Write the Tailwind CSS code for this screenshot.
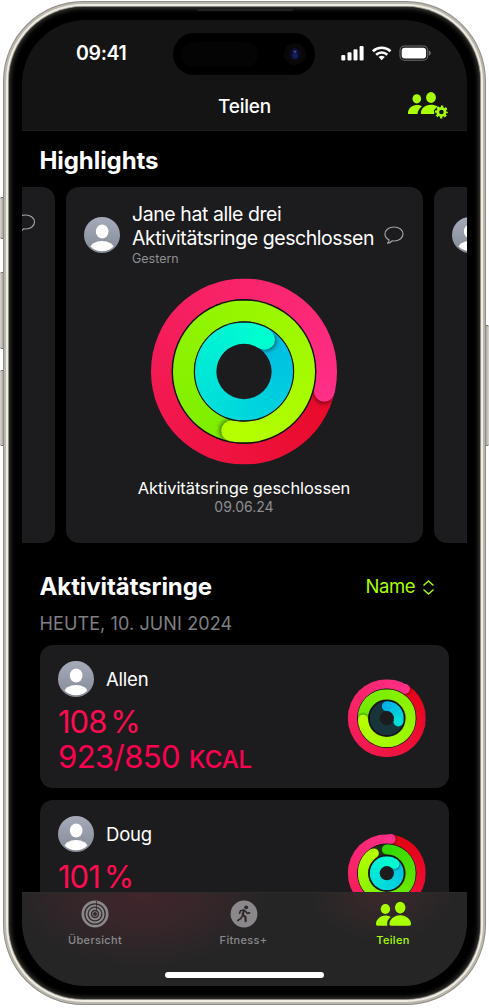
<!DOCTYPE html>
<html lang="de">
<head>
<meta charset="utf-8">
<title>Fitness – Teilen</title>
<script src="https://cdn.jsdelivr.net/npm/@tailwindcss/browser@4"></script>
</head>
<body class="bg-white w-[489px] h-[1008px] overflow-hidden font-['Inter','Noto_Sans',sans-serif] text-white">
<svg width="0" height="0" class="absolute">
  <defs>
    <linearGradient id="av" x1="0" y1="0" x2="0" y2="1"><stop offset="0" stop-color="#a5abb9"/><stop offset="1" stop-color="#858a96"/></linearGradient>
    <symbol id="avatar" viewBox="0 0 36 36">
      <clipPath id="avc"><circle cx="18" cy="18" r="16.3"/></clipPath>
      <circle cx="18" cy="18" r="18" fill="url(#av)"/>
      <ellipse cx="18.2" cy="14.5" rx="6.3" ry="7" fill="#fff"/>
      <ellipse cx="18" cy="32" rx="12" ry="8" fill="#fff" clip-path="url(#avc)"/>
    </symbol>
    <symbol id="bubble" viewBox="0 0 20 19">
      <path d="M10 1C4.900 1 1 4 1 8c0 2.600 1.600 4.700 4 5.900.1 1.300-.6 2.500-1.500 3.300 1.900 0 3.500-.9 4.600-2.300.6.1 1.200.1 1.900.1 5.100 0 9-3 9-7s-3.900-7-9-7z" fill="none" stroke="#a2a2a6" stroke-width="1.200" stroke-linejoin="round"/>
    </symbol>
  </defs>
</svg>
<div class="relative w-[489px] h-[1008px]">
  <!-- side buttons -->
  <div class="absolute left-0 top-[197px] w-[5px] h-[42px] rounded-l-[2px] bg-gradient-to-r from-[#d9d7d0] to-[#8c8981] border-y border-[#6f6c66]"></div>
  <div class="absolute left-0 top-[272px] w-[5px] h-[77px] rounded-l-[2px] bg-gradient-to-r from-[#d9d7d0] to-[#8c8981] border-y border-[#6f6c66]"></div>
  <div class="absolute left-0 top-[370px] w-[5px] h-[76px] rounded-l-[2px] bg-gradient-to-r from-[#d9d7d0] to-[#8c8981] border-y border-[#6f6c66]"></div>
  <div class="absolute left-[484px] top-[325px] w-[5px] h-[121px] rounded-r-[2px] bg-gradient-to-l from-[#d9d7d0] to-[#8c8981] border-y border-[#6f6c66]"></div>
  <!-- metal frame -->
  <div class="absolute left-[3px] top-[1px] w-[483px] h-[1004px] rounded-[80px] bg-[#8f8c85] p-[1px]">
   <div class="size-full rounded-[79px] bg-[#b9b6ad] p-[2px]">
    <div class="size-full rounded-[77px] bg-[#eeece3] p-[2px]">
     <div class="size-full rounded-[75px] bg-[#8d8a82] p-[1px]">
      <div class="size-full rounded-[74px] bg-black shadow-[inset_0_0_5px_1px_#45443f] px-[13px] pt-[13px] pb-[13px]">
       <!-- screen -->
       <div class="relative w-[445px] h-[966px] rounded-[64px] bg-black overflow-hidden flex flex-col">
        <header class="h-[111px] shrink-0 bg-[#141414] border-b border-[#191919]">
          <div class="h-[67px] flex items-center relative">
            <div class="ml-[54px] text-[19.5px] font-semibold leading-[67px] tracking-[-0.350px]">09:41</div>
            <div class="absolute left-[151px] top-[13px] w-[142px] h-[42px] rounded-full bg-black flex items-center justify-between pl-2 pr-[9px]">
              <div class="w-[77px] h-[25px] rounded-full bg-[#040404]"></div>
              <svg width="22" height="22" viewBox="0 0 22 22"><circle cx="11" cy="11" r="11" fill="#0a0709"/><circle cx="11" cy="11" r="6" fill="#0b0c22"/><circle cx="11" cy="8.800" r="2.200" fill="#1f2360"/><circle cx="11" cy="13" r="2.800" fill="#14205c"/><circle cx="11" cy="8.700" r=".8" fill="#5a62b0"/></svg>
            </div>
            <svg class="absolute left-[318px] top-[25px]" width="92" height="17" viewBox="0 0 92 17" fill="#fff">
              <rect x="1.300" y="9.900" width="4" height="5.600" rx="1.200"/><rect x="7.500" y="7.200" width="4" height="8.300" rx="1.200"/><rect x="13.500" y="4.300" width="4" height="11.200" rx="1.200"/><rect x="19.600" y="1" width="4" height="14.500" rx="1.200"/>
              <g fill="none" stroke="#fff" stroke-width="2.600"><path d="M32.900 6.200a13 13 0 0 1 17.600 0"/><path d="M36.100 9.700a8.300 8.300 0 0 1 11.200 0"/></g>
              <path d="M41.700 15.300l-3.100-3.200a4.600 4.600 0 0 1 6.200 0z"/>
              <rect x="60" y="1" width="27.800" height="14.300" rx="4.500" fill="none" stroke="#6d6d6d" stroke-width="1.100"/><rect x="61.700" y="2.700" width="24.400" height="10.900" rx="3"/>
              <path d="M89 5.600c1.200.5 1.800 1.400 1.800 2.500s-.6 2-1.800 2.500z" fill="#6d6d6d"/>
            </svg>
          </div>
          <div class="h-[38px] relative flex items-center justify-center text-[19px] font-medium leading-[38px] tracking-[-0.200px]"><span class="mt-[2px]">Teilen</span>
            <svg class="absolute left-[384px] top-[4px]" width="42" height="30" viewBox="0 0 42 30" fill="#a8ff00">
              <ellipse cx="10.800" cy="7.800" rx="4.300" ry="4.600"/><ellipse cx="25" cy="6.500" rx="4.900" ry="5.400"/>
              <path d="M2 23c-.3-5.400 3.700-9 8.800-9 2 0 3.700.5 5.100 1.400-2.700 1.900-4.400 4.600-4.400 7.600z"/>
              <path d="M15 23c-.7-5.200 3.900-9.300 10-9.300 2.600 0 4.800.6 6.600 1.900-1.500.8-1.500 1.800-2.600 2.600-1 .5-1.200 1.200-1 2.200.4.900 0 1.700.3 2.600z"/>
              <circle cx="35.400" cy="21" r="3.700" fill="none" stroke="#a8ff00" stroke-width="2.800"/>
              <circle cx="35.400" cy="21" r="5.500" fill="none" stroke="#a8ff00" stroke-width="2" stroke-dasharray="2.300 2.020" stroke-dashoffset="1.150"/>
            </svg>
          </div>
        </header>

        <main class="flex flex-col shrink-0">
          <h2 class="h-[56px] pl-[17.500px] text-[24px] font-bold leading-[60px] tracking-[-0.080px]">Highlights</h2>
          <section class="flex gap-[11px] w-[740px] h-[356px]">
            <div class="w-[33px] h-[356px] rounded-r-[13px] bg-[#1c1c1e] overflow-hidden shrink-0">
              <svg class="mt-[27px] -ml-[7px]" width="21" height="19"><use href="#bubble"/></svg>
            </div>
            <article class="w-[357px] h-[356px] rounded-[13px] bg-[#1c1c1e] shrink-0 flex flex-col items-center">
              <div class="h-[85px] w-full flex pl-[18px]">
                <svg class="mt-[30px] shrink-0" width="36" height="36"><use href="#avatar"/></svg>
                <div class="ml-[12px] mt-[16px] w-[246px] whitespace-nowrap">
                  <div class="text-[19.500px] leading-[23.500px] tracking-[-0.430px]">Jane hat alle drei<br>Aktivitätsringe geschlossen</div>
                  <div class="text-[12.500px] leading-[18px] text-[#8e8e93]">Gestern</div>
                </div>
                <svg class="ml-[6px] mt-[39px]" width="20" height="19"><use href="#bubble"/></svg>
              </div>
              <svg class="mt-[5px] mr-px shrink-0" width="188" height="188" viewBox="-94 -94.500 188 188" data-rings="82.7,20.6,464,.22,1;60.5,20.6,552,.56,1;38.1,20.9,392.6,.1,1"></svg>
              <div class="mt-[12px] mr-px text-[16.500px] leading-[22px] tracking-[-0.080px]">Aktivitätsringe geschlossen</div>
              <div class="-mt-px mr-px text-[14px] leading-[17px] text-[#8e8e93]">09.06.24</div>
            </article>
            <div class="w-[80px] h-[356px] rounded-[13px] bg-[#1c1c1e] shrink-0 pl-[18px] pt-[30px]">
              <svg width="36" height="36"><use href="#avatar"/></svg>
            </div>
          </section>
          <div class="h-[60px] mt-[14px] pl-[17.500px] pr-[33px] flex justify-between items-center">
            <h2 class="text-[24px] font-bold leading-[60px] tracking-[-0.090px]">Aktivitätsringe</h2>
            <div class="flex items-center gap-[8px] text-[#a8ff00] text-[18.500px] tracking-[-0.450px]">Name
              <svg width="11" height="15" viewBox="0 0 11 15" fill="none" stroke="#a8ff00" stroke-width="1.500" stroke-linecap="round" stroke-linejoin="round"><path d="M1 5L5.500 1 10 5M1 10l4.500 4L10 10"/></svg>
            </div>
          </div>
          <div class="-mt-[4px] h-[32px] pl-[17.500px] text-[18px] leading-[22px] tracking-[0.110px] text-[#7f7f84] whitespace-nowrap">HEUTE, 10. JUNI 2024</div>
          <div class="flex flex-col gap-[11.500px] pl-[18px] w-[427px]">
            <article class="h-[143px] rounded-[13px] bg-[#1c1c1e] flex justify-between pl-[18px] pr-[22px]">
              <div>
                <div class="mt-[16px] flex items-center gap-[12px] text-[18.500px] tracking-[-0.200px] h-[36px]"><svg width="36" height="36"><use href="#avatar"/></svg><span class="mt-[2px]">Allen</span></div>
                <div class="mt-[7px] text-[#ff0c50] text-[31px] leading-[35px] whitespace-nowrap tracking-[-1px]">108<span class="ml-[4px]">%</span></div>
                <div class="text-[#ff0050] text-[31px] leading-[35px] whitespace-nowrap tracking-[-0.560px]">923/850<span class="ml-[9px] text-[24px] font-medium tracking-[-0.100px]">KCAL</span></div>
              </div>
              <svg class="mt-[33px]" width="80" height="80" viewBox="-39.800 -40.200 80 80" data-rings="34.4,9.9,392,.06,1;23.7,9.8,627,.45,1;12,9.8,106,0,.55"></svg>
            </article>
            <article class="h-[143px] rounded-[13px] bg-[#1c1c1e] flex justify-between pl-[18px] pr-[22px]">
              <div>
                <div class="mt-[16px] flex items-center gap-[12px] text-[18.500px] tracking-[-0.200px] h-[36px]"><svg width="36" height="36"><use href="#avatar"/></svg><span class="mt-[2px]">Doug</span></div>
                <div class="mt-[7px] text-[#ff0c50] text-[31px] leading-[35px] whitespace-nowrap tracking-[-1px]">101<span class="ml-[4px]">%</span></div>
              </div>
              <svg class="mt-[33px]" width="80" height="80" viewBox="-39.800 -40.200 80 80" data-rings="34.4,9.9,366.6,0,1;23.7,9.8,327,0,1;12,9.8,400,.15,1"></svg>
            </article>
          </div>
        </main>

        <nav class="absolute left-0 top-[872px] w-[445px] h-[94px] bg-[#252526] border-t border-[#2b2b2b] overflow-hidden">
          <div class="absolute inset-0 bg-[radial-gradient(ellipse_130px_75px_at_120px_0px,#42252b_0%,#37262a_45%,transparent_100%),radial-gradient(ellipse_75px_50px_at_360px_0px,#3c292a_0%,transparent_100%)]"></div>
          <div class="relative flex justify-between w-[371px] pt-[7px] text-[11px] font-medium leading-[14px] tracking-[0.320px] text-[#8b8a8d]">
            <div class="w-[146px] flex flex-col items-center gap-[5px]">
              <svg width="28" height="28" viewBox="-14 -14 28 28" fill="none"><circle r="13.500" fill="#8b888b"/><g stroke="#352a2d" stroke-width="1.300"><circle r="10.200"/><circle r="6.900"/><circle r="3.500" stroke-width="1.500"/><path d="M1.500-13v9" stroke-width=".8"/></g><circle r="2" fill="#352a2d"/></svg>
              <span>Übersicht</span>
            </div>
            <div class="w-[150px] flex flex-col items-center gap-[5px]">
              <svg width="28" height="28" viewBox="0 0 28 28"><circle cx="14" cy="14" r="13.400" fill="#8b888b"/><circle cx="16.200" cy="7.300" r="1.900" fill="#302729"/><g fill="none" stroke="#302729" stroke-linecap="round" stroke-linejoin="round" stroke-width="1.600"><path d="M9.600 13.300l.9-2.600 3.400-.7 2.200 1.800 1 1.600 2.500-.5"/><path d="M13.900 10.600l-1.200 4.200 2.700 2 .3 4.300" stroke-width="2.200"/><path d="M12.200 16.200l-1.600 2.500-2.800 1.800"/></g></svg>
              <span>Fitness+</span>
            </div>
            <div class="w-[148px] -mr-[74px] flex flex-col items-center gap-[5px] text-[#a8ff00]">
              <svg class="-ml-[1px]" width="38" height="28" viewBox="0 0 38 28" fill="#a8ff00">
                <ellipse cx="11.400" cy="9" rx="4.700" ry="5.100"/><ellipse cx="26.200" cy="7.600" rx="5.200" ry="5.800"/>
                <path d="M3.600 25.700c-1 0-1.600-.4-1.600-1.600 0-4.300 4.200-8.500 9.400-8.500 2 0 3.700.5 5.200 1.500-2.600 2-4.100 5-3.300 8.600z"/>
                <path d="M17.200 25.700c-1.200 0-1.800-.5-1.800-1.700 0-4.300 4.500-8.800 10.800-8.800S37 19.700 37 24c0 1.200-.6 1.700-1.800 1.700z"/>
              </svg>
              <span>Teilen</span>
            </div>
          </div>
          <div class="absolute left-[143px] top-[79px] w-[159px] h-[6px] rounded-full bg-white"></div>
        </nav>
       </div>
      </div>
     </div>
    </div>
   </div>
  </div>
  <div class="absolute left-[197px] top-[9px] w-[96px] h-[2px] rounded-full bg-[#222]"></div>
</div>
<script>
// Draws activity rings. Each entry: radius, stroke width, progress in degrees,
// and the palette positions of the lap's first and last colour.
const PAL = [
  {a:[227,0,15], b:[255,46,134], track:'#3a0d16'},
  {a:[50,216,0], b:[182,255,0], track:'#22340f'},
  {a:[0,180,230], b:[0,255,208], track:'#17343b'}
];
const mix = (p,t) => 'rgb(' + p.a.map((v,i)=>Math.round(v+(p.b[i]-v)*t)).join(',') + ')';
const pt = (r,d) => { const q=d*Math.PI/180; return [r*Math.sin(q), -r*Math.cos(q)]; };
document.querySelectorAll('[data-rings]').forEach((svg,n) => {
  let h = '';
  svg.dataset.rings.split(';').forEach((e,i) => {
    const [r,w,prog,t0,t1] = e.split(',').map(Number), p = PAL[i];
    const id = 'c'+n+'_'+i, ro = r+w/2, ri = r-w/2;
    const over = prog > 360, from = over ? prog%360 : 0, span = over ? 360 : prog;
    if (i) h += `<circle r="${ro+(n==0?1.4:1)}" fill="#101012"/>`;
    const stops = `${mix(p,t0)} 0deg,${mix(p,t1)} ${span}deg` + (over ? '' : `,${p.track} ${span}deg`);
    h += `<foreignObject x="${-ro}" y="${-ro}" width="${2*ro}" height="${2*ro}"><div style="width:${2*ro}px;height:${2*ro}px;border-radius:50%;background:conic-gradient(from ${from}deg,${stops})"></div></foreignObject>`;
    const [x,y] = pt(r,from+span);
    if (over) {
      const [sx,sy] = pt(r,from+w/r*5), a = pt(ro*1.5,from), b = pt(ro*1.5,from+80);
      // the shadow falls only on the stretch ahead of the tip
      h += `<clipPath id="k${id}"><circle r="${ro}"/></clipPath><clipPath id="${id}"><path d="M0 0L${a}L${b}Z"/></clipPath><filter id="f${id}" x="-50%" y="-50%" width="200%" height="200%"><feGaussianBlur stdDeviation="${w/11}"/></filter><g clip-path="url(#k${id})"><g clip-path="url(#${id})"><circle cx="${sx}" cy="${sy}" r="${w/2}" opacity=".5" filter="url(#f${id})"/></g></g>`;
    } else {
      h += `<circle cx="0" cy="${-r}" r="${w/2}" fill="${mix(p,t0)}"/>`;
    }
    h += `<circle cx="${x}" cy="${y}" r="${w/2}" fill="${mix(p,t1)}"/>`;
    h += `<circle r="${ri}" fill="#1c1c1e"/>`;
  });
  svg.innerHTML = h;
});
</script>
</body>
</html>
